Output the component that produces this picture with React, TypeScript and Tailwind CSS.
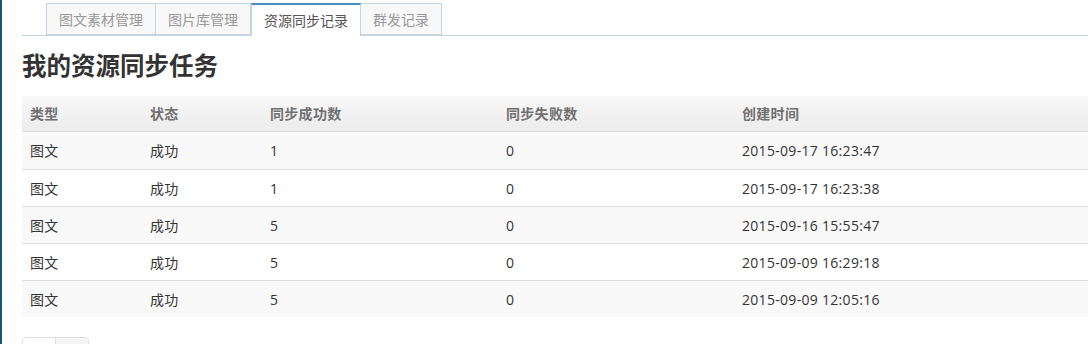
import React from "react";

const rows = [
  ["图文", "成功", "1", "0", "2015-09-17 16:23:47"],
  ["图文", "成功", "1", "0", "2015-09-17 16:23:38"],
  ["图文", "成功", "5", "0", "2015-09-16 15:55:47"],
  ["图文", "成功", "5", "0", "2015-09-09 16:29:18"],
  ["图文", "成功", "5", "0", "2015-09-09 12:05:16"],
];

const tabs = ["图文素材管理", "图片库管理", "资源同步记录", "群发记录"];
const widths = ["w-[120px]", "w-[120px]", "w-[236px]", "w-[236px]", "flex-1"];

export default function App() {
  return (
    <div
      className="flex h-[344px] w-[1088px] overflow-hidden bg-white"
      style={{ fontFamily: '"Open Sans", "Noto Sans CJK SC", sans-serif' }}
    >
      <div className="w-[2px] shrink-0 bg-[#1b5573]" />
      <div className="flex-1 pl-[20px] pt-[3px]">
        <div className="flex border-b border-[#c5d3e0] pl-[24px]">
          {tabs.map((t, i) => (
            <div
              key={t}
              className={
                i === 2
                  ? "-mb-px flex h-[33px] items-center border-x border-t-2 border-x-[#c5d3e0] border-t-[#4a8bc2] bg-white px-[12px] text-[14px] text-[#555]"
                  : "flex h-[32px] items-center border border-[#c5d3e0] bg-[#f8f8f8] px-[12px] text-[14px] text-[#999] " +
                    (i === 1 ? "border-l-0" : i === 3 ? "border-l-0" : "")
              }
            >
              {t}
            </div>
          ))}
        </div>
        <h1 className="mt-[14px] text-[24.5px] leading-[32px] font-bold text-[#333]">
          我的资源同步任务
        </h1>
        <div className="mt-[14px] tracking-[0.3px]">
          <div className="flex h-[36px] items-center border-b border-[#ddd] bg-gradient-to-b from-[#f8f8f8] to-[#ececec] text-[14px] font-bold text-[#707070]">
            {["类型", "状态", "同步成功数", "同步失败数", "创建时间"].map((h, i) => (
              <div key={h} className={`${widths[i]} px-[8px]`}>
                {h}
              </div>
            ))}
          </div>
          {rows.map((r, ri) => (
            <div
              key={ri}
              className={`flex h-[37px] items-center text-[14px] text-[#333] ${
                ri > 0 ? "border-t border-[#ddd]" : ""
              } ${ri % 2 === 0 ? "bg-[#f9f9f9]" : "bg-white"}`}
            >
              {r.map((c, ci) => (
                <div key={ci} className={`${widths[ci]} px-[8px]`}>
                  {c}
                </div>
              ))}
            </div>
          ))}
        </div>
        <div className="mt-[20px] flex h-[20px] w-[67px] overflow-hidden rounded-t-[4px] border border-[#ddd]">
          <div className="w-[33px] border-r border-[#ddd] bg-white" />
          <div className="flex-1 bg-[#f5f5f5]" />
        </div>
      </div>
    </div>
  );
}
